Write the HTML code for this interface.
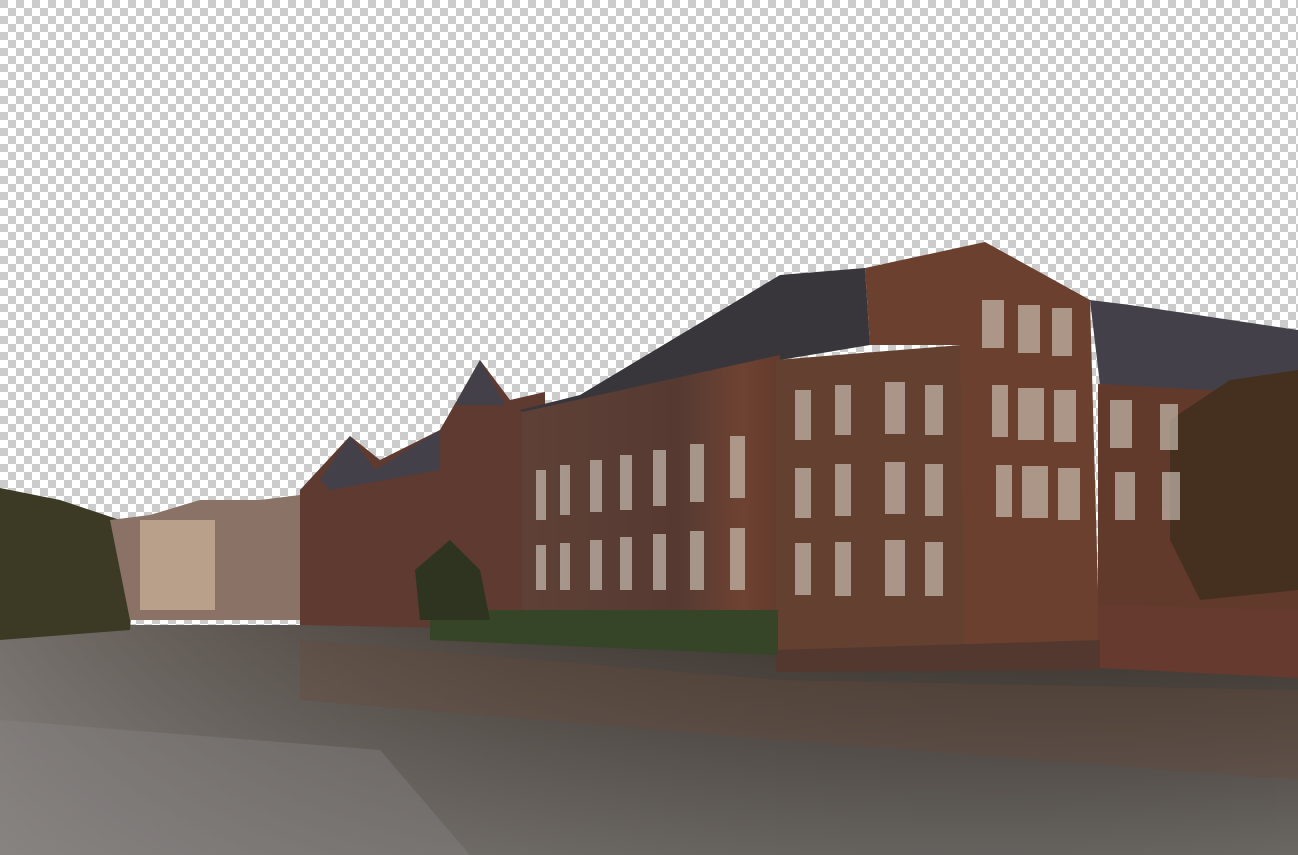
<!DOCTYPE html>
<html><head><style>
html,body{margin:0;padding:0;width:1298px;height:855px;overflow:hidden}
body{background-color:#fff;background-image:linear-gradient(45deg,#ccc 25%,transparent 25%,transparent 75%,#ccc 75%),linear-gradient(45deg,#ccc 25%,transparent 25%,transparent 75%,#ccc 75%);background-size:16px 16px;background-position:8px 0,0 8px}
svg{position:absolute;left:0;top:0}
</style></head><body>
<svg width="1298" height="855" viewBox="0 0 1298 855">
<defs>
<linearGradient id="w" x1="0" y1="0" x2="0" y2="1">
<stop offset="0" stop-color="#3e3630"/><stop offset="0.4" stop-color="#4e4843"/><stop offset="1" stop-color="#6a6662"/></linearGradient>
<linearGradient id="wl" x1="0" y1="0" x2="1" y2="0">
<stop offset="0" stop-color="#9a9592" stop-opacity="0.6"/><stop offset="0.4" stop-color="#7a7470" stop-opacity="0.2"/><stop offset="1" stop-color="#000" stop-opacity="0"/></linearGradient>
<linearGradient id="b" x1="0" y1="0" x2="1" y2="0">
<stop offset="0" stop-color="#5e4036"/><stop offset="0.6" stop-color="#563a32"/><stop offset="0.85" stop-color="#6e4232"/><stop offset="1" stop-color="#623a2c"/></linearGradient>
</defs>
<rect x="0" y="625" width="1298" height="230" fill="url(#w)"/>
<rect x="0" y="625" width="1298" height="230" fill="url(#wl)"/>
<path d="M0 488 L60 500 L120 520 L135 560 L130 630 L0 640 Z" fill="#3c3a24"/>
<path d="M110 520 L150 515 L200 500 L260 500 L300 495 L310 620 L130 620 Z" fill="#8a7266"/>
<path d="M140 520 L215 520 L215 610 L140 610 Z" fill="#b8a08a"/>
<path d="M300 490 L350 436 L380 460 L440 430 L480 360 L510 400 L545 392 L545 630 L300 625 Z" fill="#5e3a30"/>
<path d="M320 480 L350 436 L375 470 L440 430 L440 470 L330 490 Z" fill="#44404a"/>
<path d="M455 405 L480 360 L505 405 Z" fill="#44404a"/>
<path d="M520 410 L580 395 L780 275 L865 268 L870 345 L780 360 L525 415 Z" fill="#38363a"/>
<path d="M522 412 L780 355 L782 612 L522 612 Z" fill="url(#b)"/>
<path d="M776 360 L962 345 L967 662 L776 658 Z" fill="#63402f"/>
<path d="M865 268 L985 242 L1090 300 L1100 662 L965 665 L960 345 L870 345 Z" fill="#6c402e"/>
<path d="M1090 300 L1130 305 L1298 330 L1298 395 L1100 385 Z" fill="#44404a"/>
<path d="M1098 384 L1298 395 L1298 612 L1098 612 Z" fill="#613a2c"/>
<path d="M1098 605 L1298 610 L1298 678 L1098 668 Z" fill="#663a2e"/>
<path d="M776 650 L1100 640 L1100 670 L776 672 Z" fill="#533830"/>
<path d="M1170 420 L1230 380 L1298 370 L1298 590 L1200 600 L1170 540 Z" fill="#45301f"/>
<path d="M430 610 L778 610 L778 655 L430 640 Z" fill="#364428"/>
<path d="M415 570 L450 540 L480 570 L490 620 L420 620 Z" fill="#2e3420"/>
<g fill="#d8d0c4" opacity="0.6">
<rect x="536" y="470" width="10" height="50"/><rect x="560" y="465" width="10" height="50"/><rect x="590" y="460" width="12" height="52"/><rect x="620" y="455" width="12" height="55"/><rect x="653" y="450" width="13" height="56"/><rect x="690" y="444" width="14" height="58"/><rect x="730" y="436" width="15" height="62"/>
<rect x="536" y="545" width="10" height="45"/><rect x="560" y="543" width="10" height="47"/><rect x="590" y="540" width="12" height="50"/><rect x="620" y="537" width="12" height="53"/><rect x="653" y="534" width="13" height="56"/><rect x="690" y="531" width="14" height="59"/><rect x="730" y="528" width="15" height="62"/>
<rect x="795" y="390" width="16" height="50"/><rect x="835" y="385" width="16" height="50"/><rect x="885" y="382" width="20" height="52"/><rect x="925" y="385" width="18" height="50"/>
<rect x="795" y="468" width="16" height="50"/><rect x="835" y="464" width="16" height="52"/><rect x="885" y="462" width="20" height="52"/><rect x="925" y="464" width="18" height="52"/>
<rect x="795" y="543" width="16" height="52"/><rect x="835" y="542" width="16" height="54"/><rect x="885" y="540" width="20" height="56"/><rect x="925" y="542" width="18" height="54"/>
<rect x="982" y="300" width="22" height="48"/><rect x="1018" y="305" width="22" height="48"/><rect x="1052" y="308" width="20" height="48"/>
<rect x="992" y="385" width="16" height="52"/><rect x="1018" y="388" width="26" height="52"/><rect x="1054" y="390" width="22" height="52"/>
<rect x="996" y="465" width="16" height="52"/><rect x="1022" y="466" width="26" height="52"/><rect x="1058" y="468" width="22" height="52"/>
<rect x="1110" y="400" width="22" height="48"/><rect x="1160" y="404" width="18" height="46"/><rect x="1115" y="472" width="20" height="48"/><rect x="1162" y="472" width="18" height="48"/>
</g>
<path d="M300 640 L780 680 L1298 690 L1298 780 L780 740 L300 700 Z" fill="#6a4a38" opacity="0.3"/>
<path d="M0 720 L380 750 L470 855 L0 855 Z" fill="#8a8886" opacity="0.35"/>
</svg>
</body></html>
